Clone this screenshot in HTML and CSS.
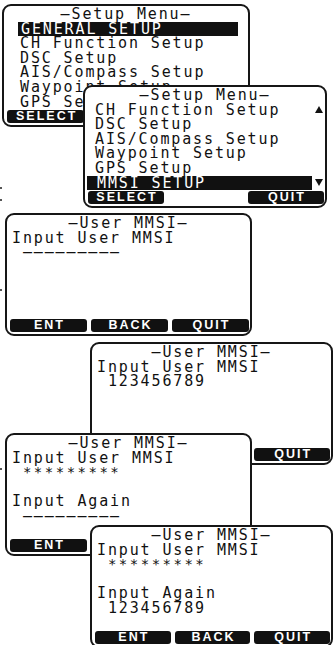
FILE: index.html
```html
<!DOCTYPE html>
<html lang="en">
<head>
    <meta charset="UTF-8">
    <meta name="viewport" content="width=device-width, initial-scale=1.0">
    <title>User MMSI Setup</title>
    <link rel="stylesheet" href="styles.css">
</head>
<body>
<div class="sheet">
    <!-- small marks from the printed page margin -->
    <span class="tick" style="top:187px"></span>
    <span class="tick" style="top:199px"></span>
    <span class="tick" style="top:289px"></span>
    <span class="tick" style="top:468px"></span>

    <!-- 1: setup menu, first page -->
    <div class="lcd menu menu-main">
        <div class="row title">—Setup Menu—</div>
        <div class="row sel"><span class="bar">GENERAL SETUP</span><span class="arrow"></span></div>
        <div class="row item">CH Function Setup</div>
        <div class="row item">DSC Setup</div>
        <div class="row item">AIS/Compass Setup</div>
        <div class="row item">Waypoint Setup</div>
        <div class="row item">GPS Setup</div>
        <div class="keys">
            <span class="key c1">SELECT</span>
        </div>
    </div>

    <!-- 2: setup menu, scrolled to MMSI -->
    <div class="lcd menu menu-more">
        <div class="row title">—Setup Menu—</div>
        <div class="row item"><span class="label">CH Function Setup</span><span class="arrow"><svg width="8" height="7" viewBox="0 0 8 7"><polygon points="4,0 8,7 0,7" fill="#111"/></svg></span></div>
        <div class="row item">DSC Setup</div>
        <div class="row item">AIS/Compass Setup</div>
        <div class="row item">Waypoint Setup</div>
        <div class="row item">GPS Setup</div>
        <div class="row sel"><span class="bar">MMSI SETUP</span><span class="arrow"><svg width="8" height="7" viewBox="0 0 8 7"><polygon points="0,0 8,0 4,7" fill="#111"/></svg></span></div>
        <div class="keys">
            <span class="key c1">SELECT</span>
            <span class="key c3">QUIT</span>
        </div>
    </div>

    <!-- 3: empty input -->
    <div class="lcd screen scr-3">
        <div class="row title">—User MMSI—</div>
        <div class="row">Input User MMSI</div>
        <div class="row"> —————————</div>
        <div class="keys">
            <span class="key c1">ENT</span>
            <span class="key c2">BACK</span>
            <span class="key c3">QUIT</span>
        </div>
    </div>

    <!-- 4: number entered -->
    <div class="lcd screen scr-4">
        <div class="row title">—User MMSI—</div>
        <div class="row">Input User MMSI</div>
        <div class="row"> 123456789</div>
        <div class="keys">
            <span class="key c3">QUIT</span>
        </div>
    </div>

    <!-- 5: confirm, empty -->
    <div class="lcd screen scr-5">
        <div class="row title">—User MMSI—</div>
        <div class="row">Input User MMSI</div>
        <div class="row stars"> *********</div>
        <div class="row"></div>
        <div class="row">Input Again</div>
        <div class="row"> —————————</div>
        <div class="keys">
            <span class="key c1">ENT</span>
        </div>
    </div>

    <!-- 6: confirm, entered -->
    <div class="lcd screen scr-6">
        <div class="row title">—User MMSI—</div>
        <div class="row">Input User MMSI</div>
        <div class="row stars"> *********</div>
        <div class="row"></div>
        <div class="row">Input Again</div>
        <div class="row"> 123456789</div>
        <div class="keys">
            <span class="key c1">ENT</span>
            <span class="key c2">BACK</span>
            <span class="key c3">QUIT</span>
        </div>
    </div>
</div>
</body>
</html>
```

FILE: styles.css
```css
html, body {
    margin: 0;
    padding: 0;
    background: #fff;
    overflow: hidden;
}

.sheet {
    position: relative;
    width: 336px;
    height: 645px;
    overflow: hidden;
    font-family: "DejaVu Sans Mono", monospace;
    font-size: 15px;
    letter-spacing: 1.87px;
    color: #111;
}

.tick {
    position: absolute;
    left: 0;
    width: 2px;
    height: 2px;
    background: #555;
}

/* each LCD screen is a window laid on the page */
.lcd {
    position: absolute;
    box-sizing: border-box;
    height: 123px;
    display: flex;
    flex-direction: column;
    padding: 1px 0;
    border: 2px solid #161616;
    border-radius: 9px;
    background: #fff;
}

.menu-main { left: 2px;  top: 4px;   width: 248px; }
.menu-more { left: 83px; top: 85px;  width: 244px; }
.scr-3     { left: 5px;  top: 213px; width: 247px; }
.scr-4     { left: 90px; top: 342px; width: 243px; }
.scr-5     { left: 5px;  top: 433px; width: 247px; }
.scr-6     { left: 90px; top: 525px; width: 243px; }

.row {
    flex: none;
    height: 14.6px;
    line-height: 14.6px;
    white-space: pre;
    padding-left: 5px;
}

.title {
    text-align: center;
    padding-left: 0;
}

.stars {
    font-size: 14px;
    letter-spacing: 2.5px;
}

/* menu lists */
.item {
    display: flex;
}

.menu-main .item { padding-left: 16px; }
.menu-more .item { padding-left: 10px; }

.label {
    flex: 1;
}

.sel {
    display: flex;
    padding-left: 0;
}

.bar {
    flex: 1;
    background: #111;
    color: #fff;
}

.menu-main .bar {
    margin-left: 14px;
    padding-left: 3px;
}

.menu-more .bar {
    margin-left: 2px;
    padding-left: 10px;
}

.arrow {
    width: 13px;
    display: flex;
    align-items: center;
    justify-content: center;
}

.menu-main .arrow { width: 10px; }

/* soft keys along the bottom */
.keys {
    margin-top: auto;
    display: grid;
    grid-template-columns: repeat(3, 1fr);
    gap: 4px;
    height: 14.6px;
    align-items: center;
    padding: 0 1px 0 3px;
}

.key {
    height: 13px;
    line-height: 13px;
    border-radius: 3px;
    background: #111;
    color: #fff;
    font-family: "Liberation Sans", Arial, sans-serif;
    font-weight: bold;
    font-size: 12.5px;
    letter-spacing: 2px;
    padding-left: 2px;
    text-align: center;
}

.c1 { grid-column: 1; }
.c2 { grid-column: 2; }
.c3 { grid-column: 3; }
```
